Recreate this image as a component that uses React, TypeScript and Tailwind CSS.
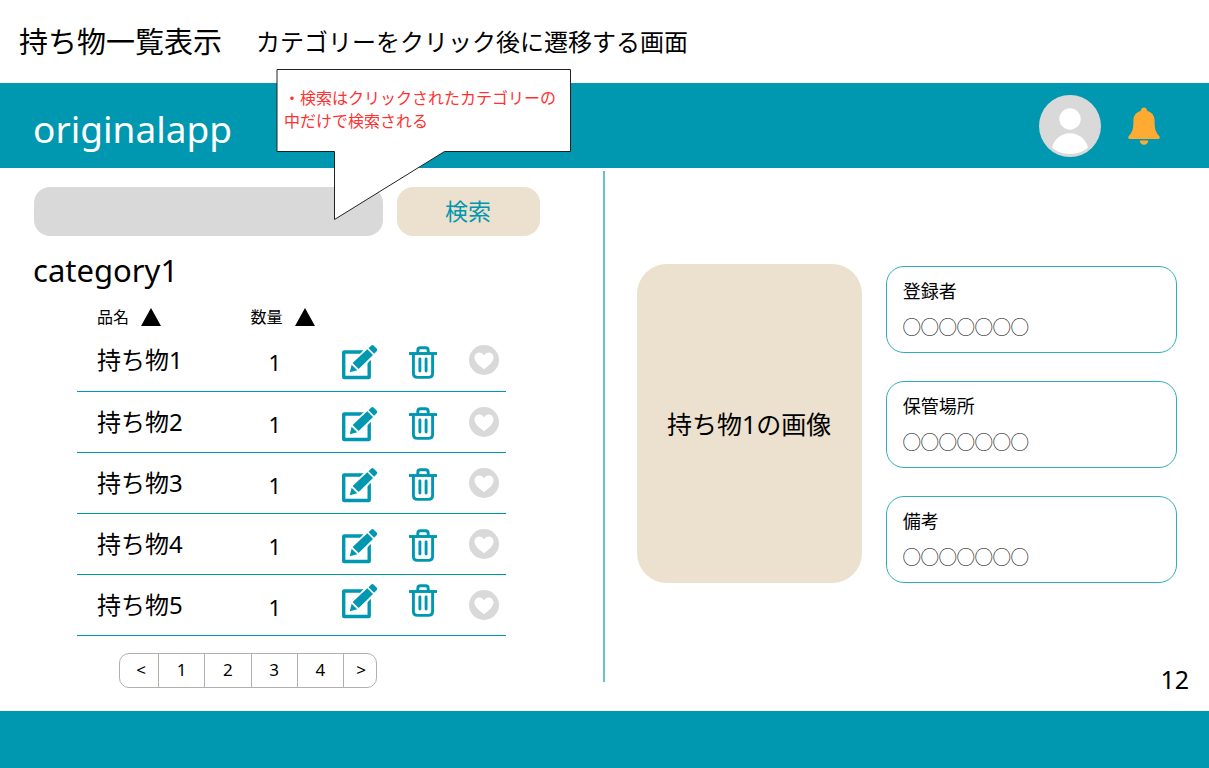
import { useState } from 'react';

type Item = { id: number; name: string; quantity: number };

const items: Item[] = [1, 2, 3, 4, 5].map((id) => ({ id, name: `持ち物${id}`, quantity: 1 }));

const details = [
  { label: '登録者', value: '◯◯◯◯◯◯◯' },
  { label: '保管場所', value: '◯◯◯◯◯◯◯' },
  { label: '備考', value: '◯◯◯◯◯◯◯' },
];

const pages = ['<', '1', '2', '3', '4', '>'];

function AvatarIcon() {
  return (
    <svg viewBox="0 0 62 62" className="size-[62px]" aria-hidden="true">
      <circle cx="31" cy="31" r="31" fill="#d9d9d9" />
      <circle cx="31" cy="24" r="10.7" fill="#fff" />
      <path d="M13 52.6C15.5 43.6 22.6 38.3 31 38.3s15.500 5.300 18 14.300C44.500 57 38 59 31 59s-13.500-2-18-6.400Z" fill="#fff" />
    </svg>
  );
}

function BellIcon() {
  return (
    <svg viewBox="0 0 32 38" className="h-[38px] w-8" aria-hidden="true" fill="#ffab33">
      <path d="M16 .5c1.800 0 3.100 1.300 3.100 3.200 4.800 1.400 7.500 5 7.500 9.800 0 7.500.4 11 4.400 15.200 1.500 1.600.9 3.300-1.200 3.300H2.200C.1 32-.5 30.300 1 28.700c4-4.200 4.400-7.700 4.400-15.200 0-4.800 2.700-8.400 7.500-9.800C12.900 1.800 14.200.5 16 .5Z" />
      <path d="M11.800 33.500h8.400c0 2.600-1.800 4.300-4.200 4.300s-4.200-1.700-4.200-4.300Z" />
    </svg>
  );
}

function EditIcon() {
  return (
    <svg viewBox="0 0 36 36" className="size-9" aria-hidden="true">
      <rect x="1.700" y="8" width="25.500" height="25.500" rx="0.500" fill="#fff" stroke="#0097b0" strokeWidth="3.400" />
      <path d="M7.500 29 10.200 19 27 2.200 34 9.200 17.500 25.700Z" fill="#fff" stroke="#fff" strokeWidth="2" strokeLinejoin="round" />
      <path d="m7.800 28.200 1.800-7.500 5.700 5.500Z" fill="#0097b0" />
      <path d="M10.600 19 25.300 5.200l5.700 5.700-14.300 14Z" fill="#0097b0" />
      <path d="m26.500 4.200 2.800-2.700q1-1 2.200 0l3.300 3.300q1 1.100 0 2.200l-2.700 2.700Z" fill="#0097b0" />
    </svg>
  );
}

function TrashIcon() {
  return (
    <svg viewBox="0 0 28 33" className="h-[33px] w-7" aria-hidden="true" fill="none" stroke="#0097b0" strokeWidth="2.900">
      <path d="M0 7.500h28" />
      <path d="M8.800 7V4.500q0-2.700 2.700-2.700h5q2.700 0 2.700 2.700V7" />
      <path d="M4.400 7.500v19.700q0 4.200 4.200 4.200h10.800q4.200 0 4.200-4.200V7.500" />
      <path d="M10.900 13v12M17.100 13v12" strokeLinecap="round" />
    </svg>
  );
}

function HeartIcon() {
  return (
    <svg viewBox="0 0 30 30" className="size-[30px]" aria-hidden="true">
      <circle cx="15" cy="15" r="15" fill="#d9d9d9" />
      <path d="M15 24.300C9 19.800 5.500 16.500 5.500 12.600c0-2.800 2-5 4.700-5 2.100 0 3.800 1 4.800 2.900 1-1.900 2.700-2.900 4.800-2.900 2.700 0 4.700 2.200 4.700 5 0 3.900-3.500 7.200-9.500 11.700Z" fill="#fff" />
    </svg>
  );
}

function SortButton({ label }: { label: string }) {
  return (
    <button type="button" className="flex items-center gap-3 text-base leading-6">
      {label}
      <svg viewBox="0 0 20 18" className="h-[18px] w-5" aria-hidden="true">
        <path d="M10 0 20 18H0Z" />
      </svg>
    </button>
  );
}

function ItemRow({ item, last }: { item: Item; last: boolean }) {
  const action = last ? 'p-0 pb-2' : 'p-0 pt-1';
  return (
    <tr className="h-[61px] border-b border-[#0097b0]">
      <td className="p-0 pl-5 text-[24px] leading-8">{item.name}</td>
      <td className="p-0 pt-1 pl-[18px] text-[22px] leading-8">{item.quantity}</td>
      <td className={action}>
        <button type="button" aria-label={`${item.name}を編集`} className="block">
          <EditIcon />
        </button>
      </td>
      <td className={action}>
        <button type="button" aria-label={`${item.name}を削除`} className="block">
          <TrashIcon />
        </button>
      </td>
      <td className="p-0">
        <button type="button" aria-label={`${item.name}をお気に入りに追加`} className="block">
          <HeartIcon />
        </button>
      </td>
    </tr>
  );
}

function Callout() {
  return (
    <aside className="absolute top-[69px] left-[276px] w-[296px]">
      <svg viewBox="0 0 296 152" className="absolute top-0 left-0 w-full" aria-hidden="true">
        <path d="M1 .5H294.500V82.500H168.500L58.500 150.500V82.500H1Z" fill="#fff" stroke="#222" strokeWidth="1" />
      </svg>
      <p className="relative pt-[18px] pl-2 text-base leading-[23px] whitespace-nowrap text-[#ff3131]">
        ・検索はクリックされたカテゴリーの
        <br />
        中だけで検索される
      </p>
    </aside>
  );
}

export default function App() {
  const [query, setQuery] = useState('');

  return (
    <div className="relative flex min-h-screen flex-col bg-white font-['Noto_Sans','Noto_Sans_CJK_JP',sans-serif] text-black">
      <div className="flex h-[83px] items-center gap-[34px] pl-[19px] whitespace-nowrap">
        <h1 className="text-[29px] leading-10">持ち物一覧表示</h1>
        <p className="text-[24px] leading-10">カテゴリーをクリック後に遷移する画面</p>
      </div>

      <header className="flex h-[85px] items-center justify-between bg-[#0097b0] pr-[49px] pl-[33px]">
        <a href="#" className="pt-[6px] text-[37px] leading-[48px] text-white">
          originalapp
        </a>
        <div className="flex items-center gap-[27px]">
          <button type="button" aria-label="アカウント">
            <AvatarIcon />
          </button>
          <button type="button" aria-label="通知">
            <BellIcon />
          </button>
        </div>
      </header>

      <main className="grid flex-1 grid-cols-2">
        <section className="pt-[19px] pb-[23px]">
          <form className="flex gap-[14px] pr-[65px] pl-[34px]" onSubmit={(e) => e.preventDefault()}>
            <input
              type="search"
              aria-label="持ち物を検索"
              value={query}
              onChange={(e) => setQuery(e.target.value)}
              className="h-[49px] min-w-0 flex-1 rounded-2xl bg-[#d9d9d9] px-4 text-lg outline-none"
            />
            <button type="submit" className="h-[49px] w-[143px] rounded-2xl bg-[#ece0cf] pb-px text-[23px] text-[#0097b0]">
              検索
            </button>
          </form>

          <h2 className="py-[14px] pl-[33px] text-[31px] leading-10">category1</h2>

          <div className="pr-[99px] pl-[77px]">
            <table className="w-full table-fixed border-collapse text-left">
              <colgroup>
                <col />
                <col className="w-[91px]" />
                <col className="w-[67px]" />
                <col className="w-[60px]" />
                <col className="w-[37px]" />
              </colgroup>
              <thead>
                <tr className="h-[26px]">
                  <th className="p-0 pl-5 font-normal">
                    <SortButton label="品名" />
                  </th>
                  <th className="p-0 font-normal">
                    <SortButton label="数量" />
                  </th>
                  <td colSpan={3} />
                </tr>
              </thead>
              <tbody>
                {items.map((item, i) => (
                  <ItemRow key={item.id} item={item} last={i === items.length - 1} />
                ))}
              </tbody>
            </table>
          </div>

          <nav aria-label="ページ" className="mt-[17px] ml-[119px] flex h-[35px] w-[258px] divide-x divide-[#b0b0b0] overflow-hidden rounded-[10px] border border-[#b0b0b0]">
            {pages.map((page) => (
              <button key={page} type="button" className="flex-1 text-[17px] leading-8 first:flex-none first:basis-[39px] first:pl-1 last:flex-none last:basis-8 last:pl-[2px]">
                {page}
              </button>
            ))}
          </nav>
        </section>

        <section className="flex flex-col pt-[3px]">
          <div className="mb-[29px] -ml-[2px] flex flex-1 gap-6 border-l-2 border-[#66c1d0] pt-[93px] pr-8 pl-8">
            <div className="flex h-[319px] flex-[225] items-center justify-center rounded-[30px] bg-[#ece0cf] text-[25px] leading-8">
              持ち物1の画像
            </div>
            <dl className="flex flex-[291] flex-col gap-7 pt-[2px]">
              {details.map((d) => (
                <div key={d.label} className="h-[87px] rounded-[18px] border border-[#2eadc1] px-4 py-3 text-[18px] leading-6">
                  <dt>{d.label}</dt>
                  <dd className="pt-3">{d.value}</dd>
                </div>
              ))}
            </dl>
          </div>
        </section>
      </main>

      <p className="absolute right-5 bottom-[73px] text-[25px] leading-8">12</p>
      <footer className="h-[57px] bg-[#0097b0]" />
      <Callout />
    </div>
  );
}
